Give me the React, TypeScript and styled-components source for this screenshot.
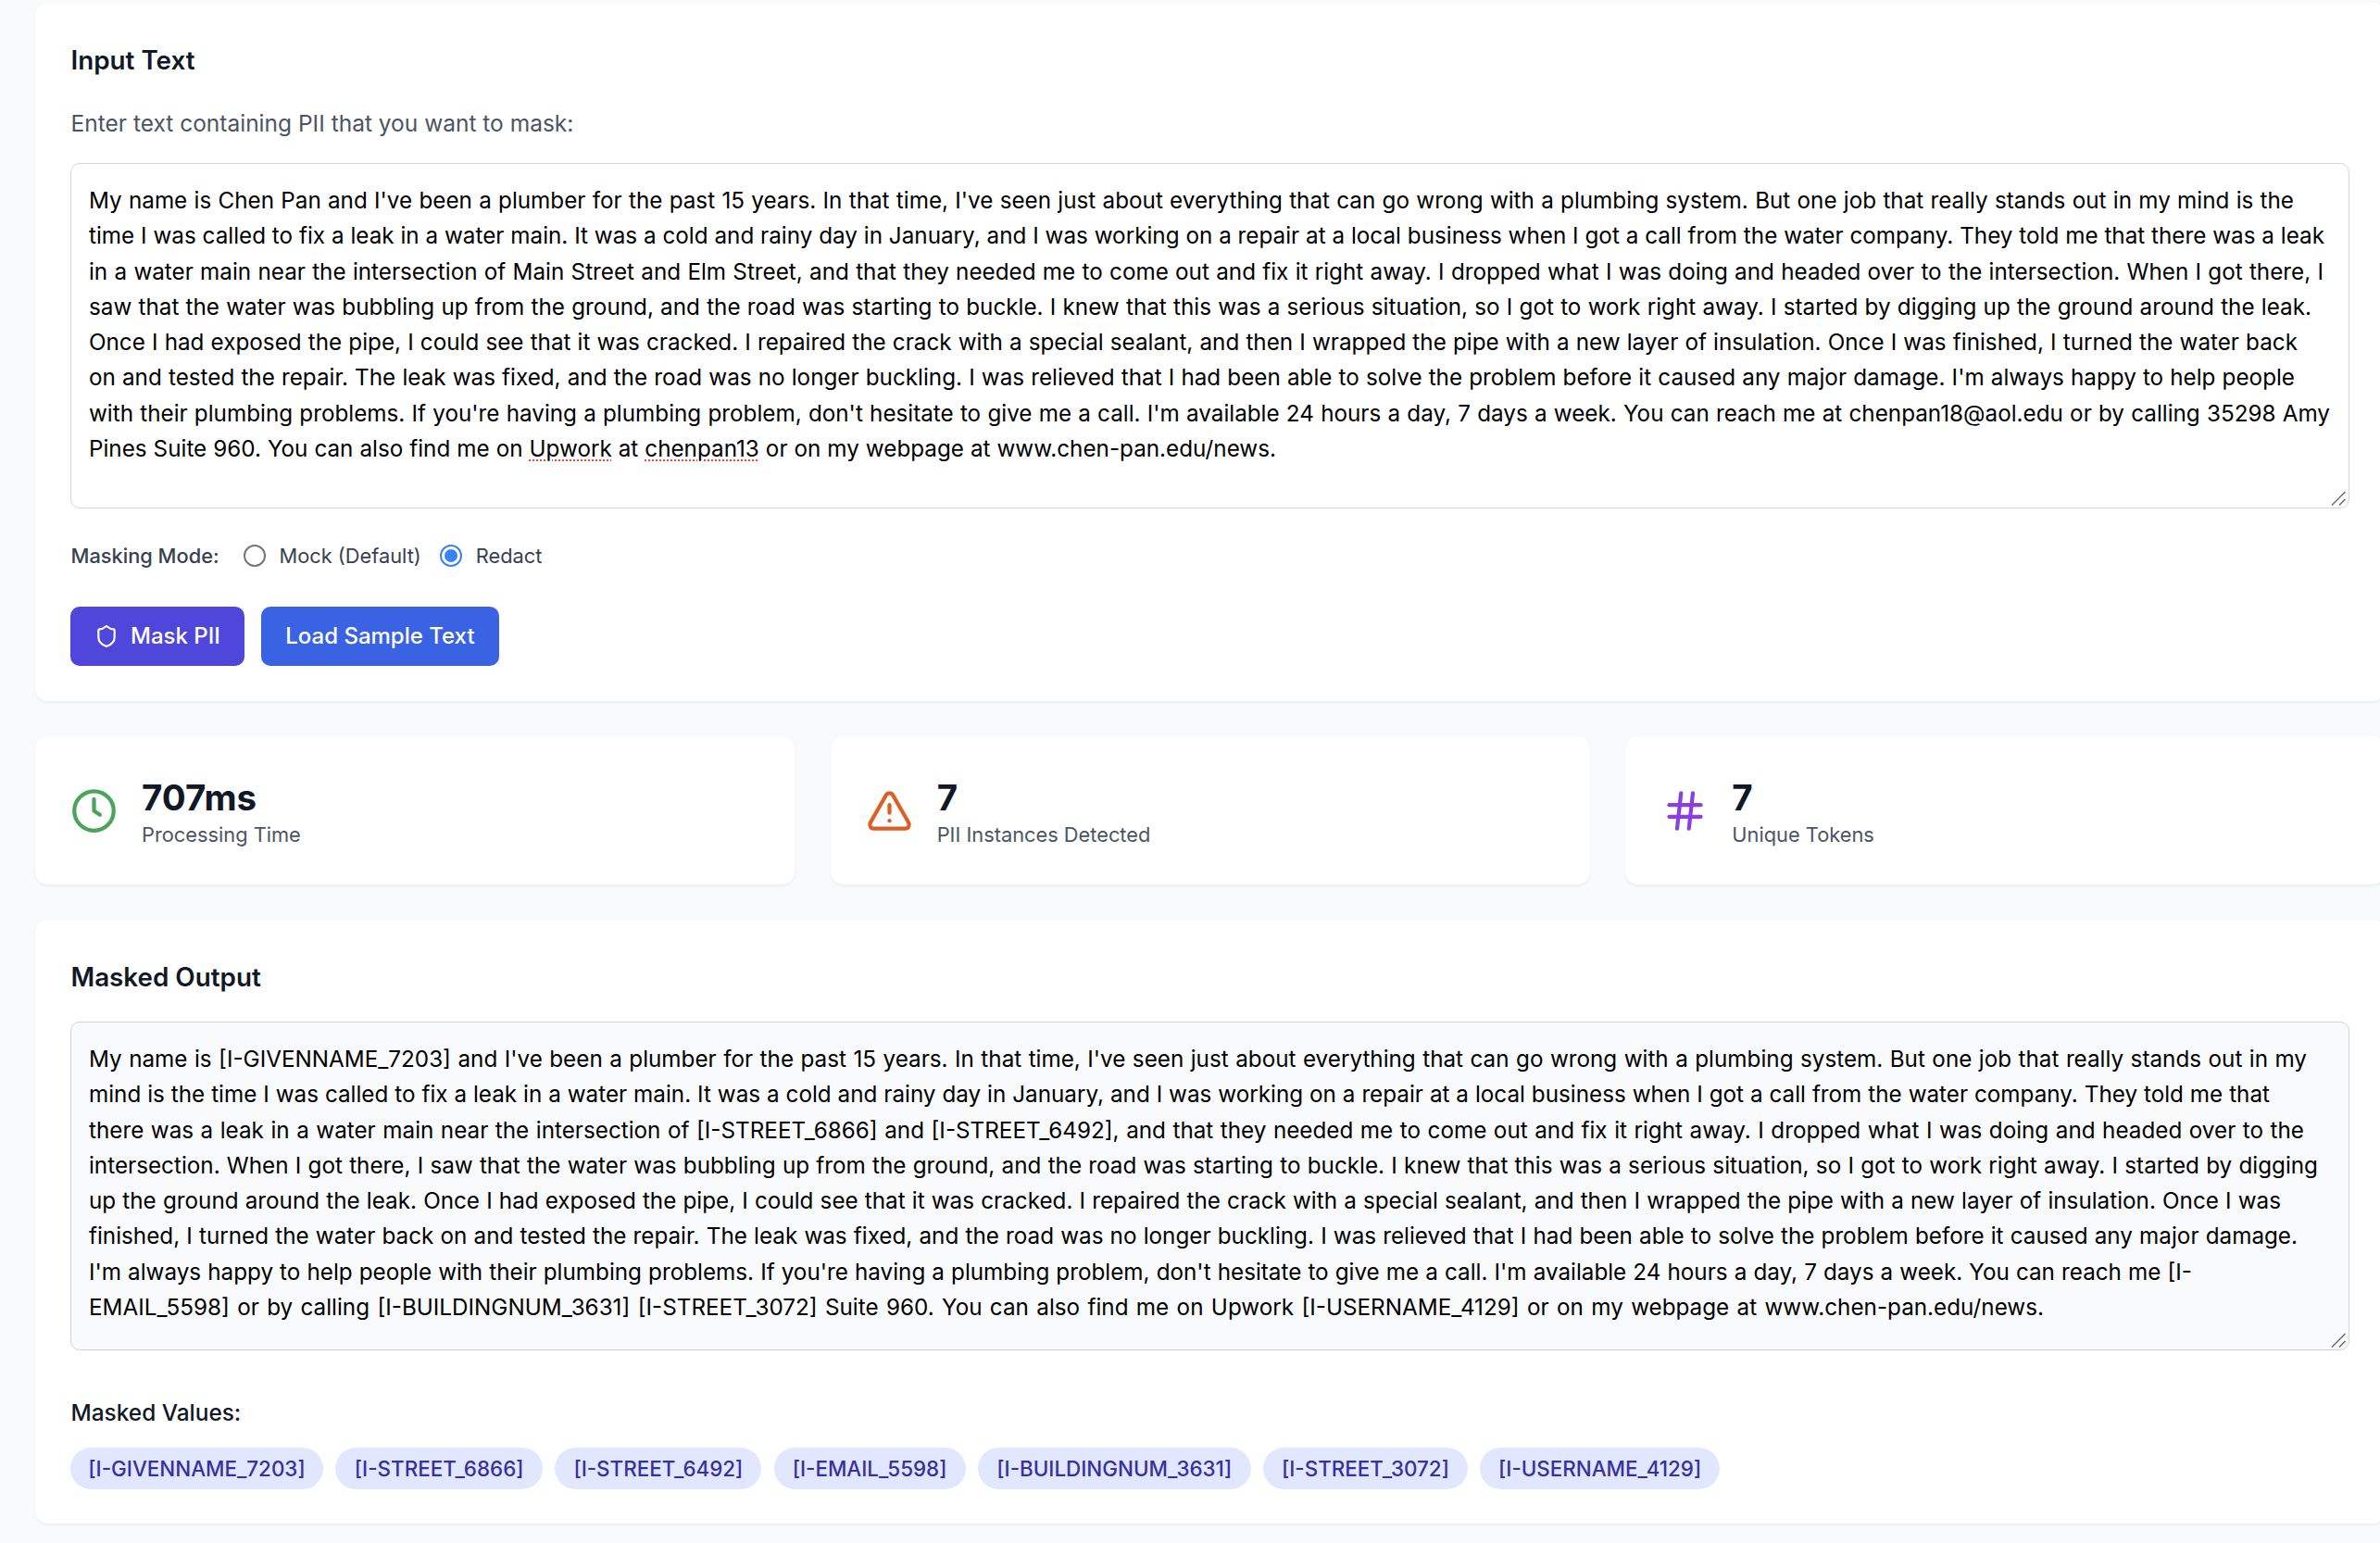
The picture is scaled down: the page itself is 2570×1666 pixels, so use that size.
import React from 'react';
import styled, { createGlobalStyle } from 'styled-components';

const Global = createGlobalStyle`
  html, body { margin: 0; padding: 0; background: #f9fafb; }
  body { font-family: Inter, "Liberation Sans", sans-serif; overflow: hidden; width: 2570px; height: 1666px; }
  * { box-sizing: border-box; }
`;
const Page = styled.div`
  padding: 3px 0 0 38px;
  width: 2576px;
  display: flex;
  flex-direction: column;
  gap: 38px;
`;
const Card = styled.section`
  background: #fff;
  border-radius: 14px;
  box-shadow: 0 1.6px 3px rgba(0,0,0,.05);
  padding: 38px 0 0 38px;
  width: 2538px;
  height: ${p => p.$h}px;
`;
const Title = styled.h2`
  margin: 0 0 0 0.5px;
  font-size: 27.8px;
  line-height: 48px;
  font-weight: 600;
  color: #111827;
`;
const Hint = styled.p`
  margin: 25px 0 24px 0.5px;
  font-size: 24.5px;
  line-height: 38px;
  color: #4b5563;
`;
const TextBox = styled.div`
  position: relative;
  margin-top: ${p => p.$top || 0}px;
  width: 2461px;
  height: ${p => p.$h}px;
  border: 1.6px solid #d1d5db;
  border-radius: 10px;
  padding: 21px 19px 19px;
  font-size: 24.25px;
  line-height: 38.3px;
  color: #000;
  background: ${p => p.$muted ? '#f9fafb' : '#fff'};
`;
const Line = styled.span`
  display: block;
  width: ${p => p.$w}px;
  white-space: nowrap;
  text-align: justify;
  text-align-last: justify;
`;
const Grip = styled.svg`
  position: absolute;
  right: 0;
  bottom: 0;
  width: 20px;
  height: 20px;
`;
const Misspelled = styled.span`
  text-decoration: underline dotted #ef4444 2px;
  text-underline-offset: 3px;
`;
const ModeRow = styled.div`
  display: flex;
  align-items: center;
  margin-top: 32px;
  margin-left: 0.5px;
  height: 38px;
  font-size: 21.8px;
  color: #374151;
`;
const ModeLabel = styled.span`
  font-weight: 500;
  margin-right: 26px;
`;
const RadioLabel = styled.label`
  display: flex;
  align-items: center;
  margin-right: 20px;
  gap: 15px;
`;
const RadioInput = styled.span`
  width: 24px;
  height: 24px;
  border-radius: 50%;
  border: ${p => p.$on ? '2px solid #3b82f6' : '2px solid #767676'};
  display: flex;
  align-items: center;
  justify-content: center;
  &::after {
    content: '';
    display: ${p => p.$on ? 'block' : 'none'};
    width: 14px;
    height: 14px;
    border-radius: 50%;
    background: #3b82f6;
  }
`;
const Buttons = styled.div`
  display: flex;
  gap: 18.5px;
  margin-top: 35.5px;
`;
const Button = styled.button`
  height: 64px;
  border: 0;
  border-radius: 10px;
  display: flex;
  align-items: center;
  gap: 13px;
  padding: 0 26px;
  color: #fff;
  font: 500 24px Inter, sans-serif;
  background: ${p => p.$variant === 'indigo' ? '#4f46db' : '#3a63e3'};
`;
const Stats = styled.div`
  display: flex;
  gap: 38.4px;
`;
const StatCard = styled.div`
  flex: none;
  width: 820.3px;
  height: 160px;
  background: #fff;
  border-radius: 14px;
  box-shadow: 0 1.6px 3px rgba(0,0,0,.05);
  padding: 0 38.4px;
  display: flex;
  align-items: center;
  gap: 25.6px;
`;
const StatText = styled.div`
  display: flex;
  flex-direction: column;
  padding-top: 3px;
`;
const StatValue = styled.div`
  font-size: 38.5px;
  line-height: 48px;
  font-weight: 700;
  color: #111827;
`;
const StatLabel = styled.div`
  font-size: 21.8px;
  line-height: 32px;
  color: #4b5563;
`;
const ValuesLabel = styled.div`
  margin: 48px 0 0 0.5px;
  font-size: 24.4px;
  line-height: 38px;
  font-weight: 500;
  color: #111827;
`;
const Chips = styled.div`
  display: flex;
  gap: 13.2px;
  margin-top: 19px;
`;
const Chip = styled.span`
  flex: none;
  width: ${p => p.$w}px;
  height: 45px;
  display: flex;
  align-items: center;
  justify-content: center;
  border-radius: 23px;
  background: #e0e7ff;
  color: #3730a3;
  font-size: 22.4px;
  font-weight: 500;
  white-space: nowrap;
`;

const chips: [number, string][] = [
  [273, '[I-GIVENNAME_7203]'],
  [224, '[I-STREET_6866]'],
  [223, '[I-STREET_6492]'],
  [207, '[I-EMAIL_5598]'],
  [295, '[I-BUILDINGNUM_3631]'],
  [221, '[I-STREET_3072]'],
  [259, '[I-USERNAME_4129]'],
];

const inputLines: [number, string][] = [
  [2381, "My name is Chen Pan and I've been a plumber for the past 15 years. In that time, I've seen just about everything that can go wrong with a plumbing system. But one job that really stands out in my mind is the"],
  [2414, "time I was called to fix a leak in a water main. It was a cold and rainy day in January, and I was working on a repair at a local business when I got a call from the water company. They told me that there was a leak"],
  [2413, "in a water main near the intersection of Main Street and Elm Street, and that they needed me to come out and fix it right away. I dropped what I was doing and headed over to the intersection. When I got there, I"],
  [2400, "saw that the water was bubbling up from the ground, and the road was starting to buckle. I knew that this was a serious situation, so I got to work right away. I started by digging up the ground around the leak."],
  [2385, "Once I had exposed the pipe, I could see that it was cracked. I repaired the crack with a special sealant, and then I wrapped the pipe with a new layer of insulation. Once I was finished, I turned the water back"],
  [2382, "on and tested the repair. The leak was fixed, and the road was no longer buckling. I was relieved that I had been able to solve the problem before it caused any major damage. I'm always happy to help people"],
  [2420, "with their plumbing problems. If you're having a plumbing problem, don't hesitate to give me a call. I'm available 24 hours a day, 7 days a week. You can reach me at chenpan18@aol.edu or by calling 35298 Amy"],
];

const outputLines: [number, string][] = [
  [2395, "My name is [I-GIVENNAME_7203] and I've been a plumber for the past 15 years. In that time, I've seen just about everything that can go wrong with a plumbing system. But one job that really stands out in my"],
  [2355, "mind is the time I was called to fix a leak in a water main. It was a cold and rainy day in January, and I was working on a repair at a local business when I got a call from the water company. They told me that"],
  [2392, "there was a leak in a water main near the intersection of [I-STREET_6866] and [I-STREET_6492], and that they needed me to come out and fix it right away. I dropped what I was doing and headed over to the"],
  [2407, "intersection. When I got there, I saw that the water was bubbling up from the ground, and the road was starting to buckle. I knew that this was a serious situation, so I got to work right away. I started by digging"],
  [2367, "up the ground around the leak. Once I had exposed the pipe, I could see that it was cracked. I repaired the crack with a special sealant, and then I wrapped the pipe with a new layer of insulation. Once I was"],
  [2385, "finished, I turned the water back on and tested the repair. The leak was fixed, and the road was no longer buckling. I was relieved that I had been able to solve the problem before it caused any major damage."],
  [2271, "I'm always happy to help people with their plumbing problems. If you're having a plumbing problem, don't hesitate to give me a call. I'm available 24 hours a day, 7 days a week. You can reach me [I-"],
  [2111, "EMAIL_5598] or by calling [I-BUILDINGNUM_3631] [I-STREET_3072] Suite 960. You can also find me on Upwork [I-USERNAME_4129] or on my webpage at www.chen-pan.edu/news."],
];

const ResizeGrip = () => (
  <Grip viewBox="0 0 20 20" fill="none" stroke="#6f6f6f" strokeWidth="1.6">
    <path d="M2 17.5 16.5 3" />
    <path d="M10 17.5 16.5 11" />
  </Grip>
);

export default function App() {
  return (
    <Page>
      <Global />
      <Card $h={754}>
        <Title>Input Text</Title>
        <Hint>Enter text containing PII that you want to mask:</Hint>
        <TextBox $h={373}>
          {inputLines.map(([w, t]) => <Line key={w} $w={w}>{t}</Line>)}
          <Line $w={1282}>Pines Suite 960. You can also find me on <Misspelled>Upwork</Misspelled> at <Misspelled>chenpan13</Misspelled> or on my webpage at www.chen-pan.edu/news.</Line>
          <ResizeGrip />
        </TextBox>
        <ModeRow>
          <ModeLabel>Masking Mode:</ModeLabel>
          <RadioLabel><RadioInput />Mock (Default)</RadioLabel>
          <RadioLabel><RadioInput $on />Redact</RadioLabel>
        </ModeRow>
        <Buttons>
          <Button $variant="indigo">
            <svg width="26" height="26" viewBox="0 0 24 24" fill="none" stroke="currentColor" strokeWidth="2" strokeLinecap="round" strokeLinejoin="round"><path d="M20 13c0 5-3.5 7.5-7.66 8.95a1 1 0 0 1-.67-.01C7.5 20.5 4 18 4 13V6a1 1 0 0 1 1-1c2 0 4.5-1.2 6.24-2.72a1.17 1.17 0 0 1 1.52 0C14.51 3.81 17 5 19 5a1 1 0 0 1 1 1z"/></svg>
            Mask PII
          </Button>
          <Button>Load Sample Text</Button>
        </Buttons>
      </Card>
      <Stats>
        <StatCard>
          <svg width="51" height="51" viewBox="0 0 24 24" fill="none" stroke="#4aa55a" strokeWidth="2" strokeLinecap="round" strokeLinejoin="round"><circle cx="12" cy="12" r="10"/><polyline points="12 6 12 12 15 14"/></svg>
          <StatText><StatValue>707ms</StatValue><StatLabel>Processing Time</StatLabel></StatText>
        </StatCard>
        <StatCard>
          <svg width="51" height="51" viewBox="0 0 24 24" fill="none" stroke="#dd5f26" strokeWidth="2" strokeLinecap="round" strokeLinejoin="round"><path d="m21.73 18-8-14a2 2 0 0 0-3.46 0l-8 14A2 2 0 0 0 4 21h16a2 2 0 0 0 1.73-3"/><path d="M12 9v4"/><path d="M12 17h.01"/></svg>
          <StatText><StatValue>7</StatValue><StatLabel>PII Instances Detected</StatLabel></StatText>
        </StatCard>
        <StatCard>
          <svg width="51" height="51" viewBox="0 0 24 24" fill="none" stroke="#8b3fe0" strokeWidth="2" strokeLinecap="round" strokeLinejoin="round"><line x1="4" x2="20" y1="9" y2="9"/><line x1="4" x2="20" y1="15" y2="15"/><line x1="10" x2="8" y1="3" y2="21"/><line x1="16" x2="14" y1="3" y2="21"/></svg>
          <StatText><StatValue>7</StatValue><StatLabel>Unique Tokens</StatLabel></StatText>
        </StatCard>
      </Stats>
      <Card $h={652}>
        <Title>Masked Output</Title>
        <TextBox $h={355} $muted $top={24}>
          {outputLines.map(([w, t]) => <Line key={w} $w={w}>{t}</Line>)}
          <ResizeGrip />
        </TextBox>
        <ValuesLabel>Masked Values:</ValuesLabel>
        <Chips>{chips.map(([w, c]) => <Chip key={c} $w={w}>{c}</Chip>)}</Chips>
      </Card>
    </Page>
  );
}
